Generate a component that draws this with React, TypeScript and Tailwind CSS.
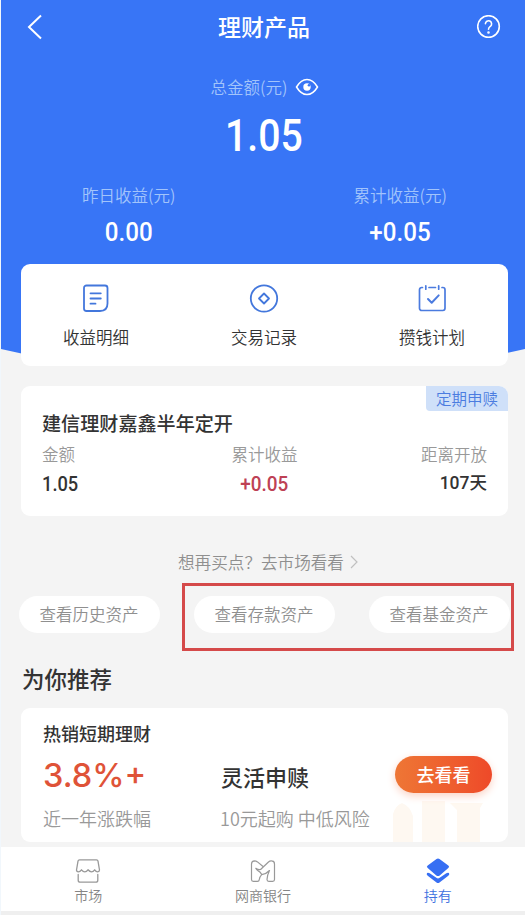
import type { ReactNode } from "react";

const quickLinks = [
  { label: "收益明细", icon: <DetailIcon /> },
  { label: "交易记录", icon: <RecordIcon /> },
  { label: "攒钱计划", icon: <PlanIcon /> },
];

const assetLinks = ["查看历史资产", "查看存款资产", "查看基金资产"];

function DetailIcon() {
  return (
    <svg width="30" height="30" viewBox="0 0 30 30" fill="none" stroke="#4377dc" strokeWidth="1.8" strokeLinecap="round">
      <path d="M5.500 1.500h18.500a2.500 2.500 0 0 1 2.500 2.500v15.500q0 7.500-7.500 7.500H5.500a2.500 2.500 0 0 1-2.500-2.500V4A2.500 2.500 0 0 1 5.500 1.500z" />
      <path d="M9.500 9.300h10.300M9.500 14.500h10.300M9.500 19.700h5" />
    </svg>
  );
}

function RecordIcon() {
  return (
    <svg width="30" height="30" viewBox="0 0 30 30" fill="none" stroke="#4377dc" strokeWidth="1.8" strokeLinejoin="round">
      <circle cx="15" cy="14.500" r="13.200" />
      <path d="M15 9.500l5 5-5 5-5-5z" />
    </svg>
  );
}

function PlanIcon() {
  return (
    <svg width="30" height="30" viewBox="0 0 30 30" fill="none" stroke="#4b7bdf" strokeWidth="1.7" strokeLinecap="round" strokeLinejoin="round">
      <path d="M5.500 3.500H4.700A2.200 2.200 0 0 0 2.500 5.700v18.600a2.200 2.200 0 0 0 2.200 2.200h21.100a2.200 2.200 0 0 0 2.200-2.200V5.700a2.200 2.200 0 0 0-2.200-2.200h-.8M12 3.500h6.500M8.800 1.800v3.400M21.700 1.800v3.400" />
      <path d="M11 15l3.700 3.700 7-7.300" strokeWidth="2" />
    </svg>
  );
}

function MarketIcon() {
  return (
    <svg width="26" height="26" viewBox="0 0 26 26" fill="none" stroke="#999" strokeWidth="1.300" strokeLinecap="round" strokeLinejoin="round">
      <path d="M4.500 1.800h17q1.300 0 1.500 1.300l1.500 8.900q0 1.800-1.800 1.800-1.700 0-3-2-1.500 2-3.200 2t-3.500-2q-1.500 2-3.200 2t-3.300-2q-1.500 2-3.200 2-1.800 0-1.800-1.800L3 3.100q.200-1.300 1.500-1.300z" />
      <path d="M3.200 16.500v5.700q0 2 2 2h15.600q2 0 2-2v-5.700" />
    </svg>
  );
}

function BankIcon() {
  return (
    <svg width="26" height="26" viewBox="0 0 26 26" fill="none" stroke="#999" strokeWidth="1.200" strokeLinecap="round" strokeLinejoin="round">
      <path d="M13 8.500L7.500 3.900Q6 2.900 4.500 2.900 1.500 3 1.500 6v15.500q0 1.800 1.800 1.800h4.200q1.500 0 1.700-1.500.3-3 2.500-5.200-1.200-2.800-3.700-4-1.500-.8-2.200-2.300 2.700 1.700 4.800 1.200L18.200 4.200q1.700-1.500 3.500-1.300 2.800.2 2.800 3V21.500q0 1.800-1.800 1.800h-3.900q-1.800 0-1.800-1.800 0-4 2.500-9-3 3.300-7.800 4.100" />
    </svg>
  );
}

function HoldIcon() {
  return (
    <svg width="26" height="26" viewBox="0 0 26 26" fill="#376ff3">
      <path d="M11.500 1q1.500-.9 3 0l8.800 6.500q1.700 1.300 0 2.600l-8.600 7.300q-1.700 1.300-3.400 0L2.700 10.100q-1.700-1.300 0-2.600z" />
      <path d="M2 15q1.200-.8 2.700.3l7 4.800q1.300.9 2.600 0l7-4.800q1.500-1.100 2.700-.3.900 1.500-.7 2.800l-8.800 6.600q-1.500 1.100-3 0l-8.800-6.600q-1.600-1.300-.7-2.800z" />
    </svg>
  );
}

function Stat({ label, value }: { label: string; value: string }) {
  return (
    <div className="flex flex-col items-center">
      <span className="h-5 text-[16.500px] font-[350] leading-[19px] text-[#a2c4fb]">{label}</span>
      <span className="mt-3 h-7 scale-x-[0.93] font-[Roboto] text-[26px] font-medium leading-7">{value}</span>
    </div>
  );
}

function Tab({ label, icon, active }: { label: string; icon: ReactNode; active?: boolean }) {
  return (
    <a className={`flex w-[175.500px] flex-col items-center pt-[11px] text-sm font-[350] leading-5 ${active ? "text-[#4072df]" : "text-[#858585]"}`}>
      {icon}
      <span className="mt-px">{label}</span>
    </a>
  );
}

export default function App() {
  return (
    <div className="relative flex h-[915px] w-[525px] flex-col overflow-hidden border-l border-[#f1f7fc] bg-[#f4f4f4] font-['Noto_Sans_CJK_SC',sans-serif] text-[#333]">
      {/* Balance header */}
      <header className="h-[360px] shrink-0 bg-[#3875f6] text-white [clip-path:polygon(0_0,100%_0,100%_349px,475px_360px,50px_360px,0_349px)]">
        <div className="flex h-[54px] items-center justify-between pl-[26px] pr-6">
          <svg width="16" height="26" viewBox="0 0 16 26" fill="none" stroke="white" strokeWidth="2">
            <path d="M14 1.500L2 13l12 11.500" />
          </svg>
          <h1 className="pb-0.5 pl-2 text-[23px] font-medium">理财产品</h1>
          <svg width="24" height="24" viewBox="0 0 24 24" fill="none" stroke="white" strokeWidth="1.600" strokeLinecap="round">
            <circle cx="11.500" cy="11.500" r="10.800" />
            <path d="M8.400 8.800a3.100 3.100 0 1 1 5 2.500c-1.300 1-1.900 1.400-1.900 2.900" />
            <circle cx="11.500" cy="17.500" r=".5" fill="white" />
          </svg>
        </div>
        <div className="mt-[21px] flex h-6 items-center justify-center gap-2 pl-1">
          <span className="text-[16.500px] font-[350] text-[#a2c4fb]">总金额(元)</span>
          <svg width="24" height="18" viewBox="0 0 24 18" fill="none">
            <path d="M1.500 9Q6 1.500 12 1.500T22.500 9Q18 16.500 12 16.500T1.500 9z" stroke="white" strokeWidth="1.500" />
            <circle cx="12" cy="9" r="3.700" fill="white" />
            <circle cx="14" cy="7.200" r="1.300" fill="#3875f6" />
          </svg>
        </div>
        <p className="mt-[15px] h-11 scale-x-[0.87] pl-0.5 text-center font-[Roboto] text-[45px] font-medium leading-[44px]">1.05</p>
        <div className="mt-7 flex justify-between pl-[81px] pr-[78px]">
          <Stat label="昨日收益(元)" value="0.00" />
          <Stat label="累计收益(元)" value="+0.05" />
        </div>
      </header>

      <main className="relative -mt-24 flex flex-col pl-5 pr-[17px]">
        <nav className="flex h-[102px] justify-between rounded-[9px] bg-white pl-[42px] pr-[43px] pt-5">
          {quickLinks.map((link) => (
            <a key={link.label} className="flex flex-col items-center">
              {link.icon}
              <span className="mt-[11px] text-[16.500px] font-[350] leading-6">{link.label}</span>
            </a>
          ))}
        </nav>

        {/* Held product */}
        <section className="relative mt-5 h-[130px] rounded-[9px] bg-white px-[21px] pt-[23px]">
          <span className="absolute right-0 top-0 h-[25px] w-[82px] rounded-bl rounded-tr-[9px] bg-[#cfe0f9] text-center text-[15.500px] font-[350] leading-[25px] text-[#4b7ce0]">定期申赎</span>
          <h2 className="text-[19.100px] font-medium leading-7">建信理财嘉鑫半年定开</h2>
          <div className="mt-[5px] grid grid-cols-3 text-[16.500px] font-[350] leading-6 text-[#999]">
            <span>金额</span>
            <span className="text-center">累计收益</span>
            <span className="text-right">距离开放</span>
          </div>
          <div className="mt-1.5 grid grid-cols-3 font-[Roboto,'Noto_Sans_CJK_SC'] text-[21px] font-medium leading-6">
            <span className="origin-left scale-x-[0.87]">1.05</span>
            <span className="scale-x-90 text-center text-[#be4154]">+0.05</span>
            <span className="text-right text-[17.500px] leading-[22px]">107天</span>
          </div>
        </section>

        <a className="mt-[34px] flex h-6 items-center justify-center gap-1.5 pl-[7px] text-[16.600px] font-[350] text-[#8f8f8f]">
          想再买点？去市场看看
          <svg width="8" height="14" viewBox="0 0 8 14" fill="none" stroke="#c0c0c0" strokeWidth="1.200">
            <path d="M1 1l6 6-6 6" />
          </svg>
        </a>

        <div className="-ml-0.5 mt-[22px] flex gap-[35px]">
          {assetLinks.map((label) => (
            <a key={label} className="-mr-px h-[37px] w-[141px] shrink-0 rounded-full bg-white pr-px text-center text-[16.500px] font-[350] leading-[37px] text-[#8f8f8f]">
              {label}
            </a>
          ))}
        </div>
        {/* Marker around the deposit and fund links */}
        <div className="absolute left-[181px] top-[319px] h-[68px] w-[332px] border-[3px] border-[#d54a4a]" />

        <h2 className="mt-[29px] pl-px text-[22.500px] font-medium leading-8">为你推荐</h2>

        <section className="relative mt-3.5 h-[134px] overflow-hidden rounded-[9px] bg-white px-[21px] pt-[11px]">
          <svg className="absolute bottom-0 right-[18px]" width="100" height="44" viewBox="0 0 100 44">
            <path d="M3 44V16Q5 8 12 5q8 3 11 13v26zM32 44V3h23v41zM67 44V12l-7-7h33l-3 5v34z" fill="#fef8f1" />
          </svg>
          <h3 className="pl-px text-lg font-medium leading-7">热销短期理财</h3>
          <div className="relative flex h-[54px] items-center">
            <strong className="w-[179px] pl-px pt-1 font-[Inter] text-[32.500px] font-medium text-[#df5338]">3.8%+</strong>
            <span className="pt-1 text-[22px] font-medium">灵活申赎</span>
            <button className="-mr-[5px] ml-auto h-[37px] w-[97px] rounded-full bg-linear-to-r from-[#ee7635] to-[#ee4929] pb-px text-lg font-medium text-white shadow-[0_3px_8px_#fbd3c5]">去看看</button>
          </div>
          <div className="relative mt-[5px] flex text-lg font-[350] leading-6 text-[#999]">
            <span className="w-[178px] pl-px">近一年涨跌幅</span>
            <span>10元起购 中低风险</span>
          </div>
        </section>
      </main>

      <footer className="mt-[5px] flex h-16 shrink-0 justify-center bg-white">
        <Tab label="市场" icon={<MarketIcon />} />
        <Tab label="网商银行" icon={<BankIcon />} />
        <Tab label="持有" icon={<HoldIcon />} active />
      </footer>
      <div className="h-1 shrink-0 bg-[#efefef]" />
    </div>
  );
}
